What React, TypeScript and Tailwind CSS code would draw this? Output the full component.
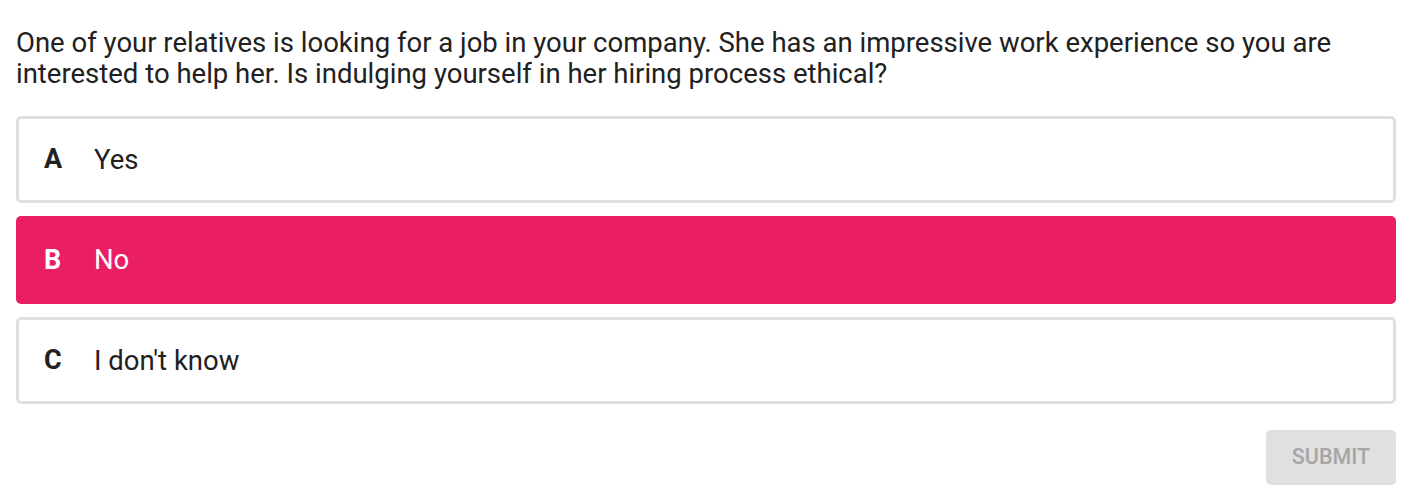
import React from "react";

const options = [
  { key: "A", label: "Yes", selected: false },
  { key: "B", label: "No", selected: true },
  { key: "C", label: "I don't know", selected: false },
];

export default function App() {
  return (
    <div
      className="bg-white w-[1417px] min-h-[489px] pl-4 pt-[27px] text-[#212121]"
      style={{ fontFamily: "Roboto, 'Noto Sans', sans-serif" }}
    >
      <div className="w-[1380px]">
        <p className="text-[27.5px] leading-[31px] m-0">
          One of your relatives is looking for a job in your company. She has an impressive work experience so you are
          <br />
          interested to help her. Is indulging yourself in her hiring process ethical?
        </p>
        <div className="mt-[27px] flex flex-col gap-[13px]">
          {options.map((o) =>
            o.selected ? (
              <div
                key={o.key}
                className="h-[88px] rounded-[5px] bg-[#e91e63] flex items-center pl-[28px] text-white"
              >
                <span className="w-[50px] text-[27px] font-bold">{o.key}</span>
                <span className="text-[27.5px]">{o.label}</span>
              </div>
            ) : (
              <div
                key={o.key}
                className="h-[87px] rounded-[5px] border-[3px] border-[#e0e0e0] bg-white flex items-center pl-[25px]"
              >
                <span className="w-[50px] text-[27px] font-bold">{o.key}</span>
                <span className="text-[27.5px]">{o.label}</span>
              </div>
            )
          )}
        </div>
        <div className="flex justify-end mt-[26px]">
          <button className="w-[130px] h-[55px] rounded-[5px] bg-[#e0e0e0] text-[#a6a6a6] text-[21.5px] font-medium uppercase">
            Submit
          </button>
        </div>
      </div>
    </div>
  );
}
